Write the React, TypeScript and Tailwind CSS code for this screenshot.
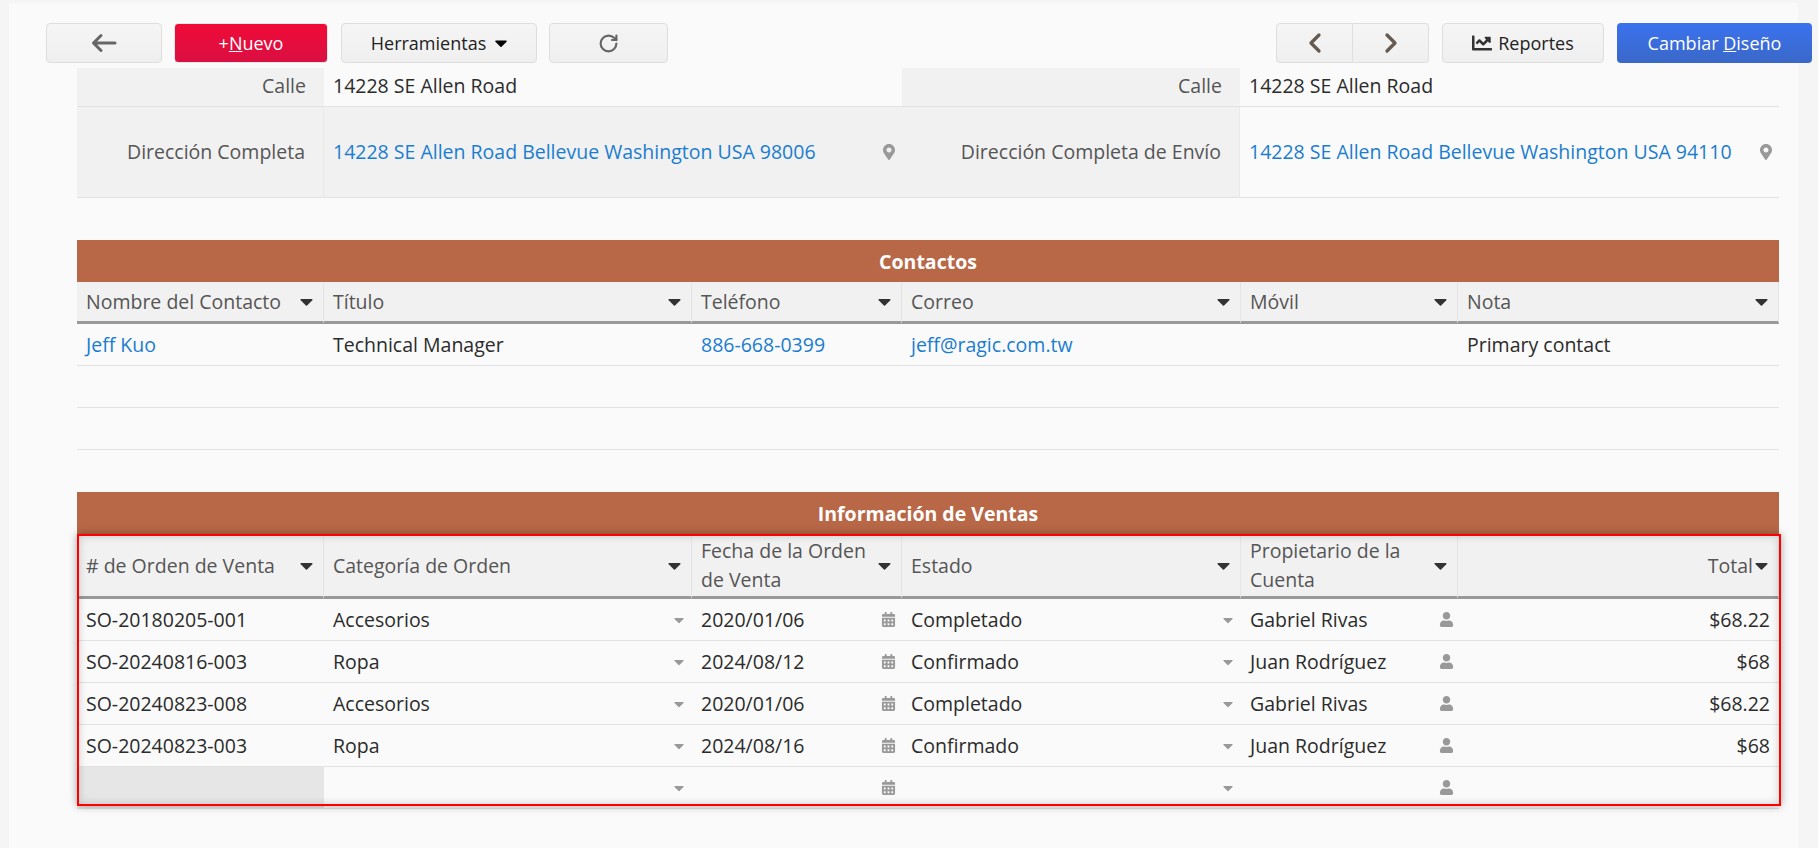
import { ChevronLeft, ChevronRight, RotateCw } from 'lucide-react';
import { FaCalendarAlt, FaCaretDown, FaChartLine, FaMapMarkerAlt, FaUser } from 'react-icons/fa';

const contactCols = [
  'Nombre del Contacto',
  'Título',
  'Teléfono',
  'Correo',
  'Móvil',
  'Nota',
];

const salesCols = [
  '# de Orden de Venta',
  'Categoría de Orden',
  'Fecha de la Orden de Venta',
  'Estado',
  'Propietario de la Cuenta',
];

const salesRows = [
  ['SO-20180205-001', 'Accesorios', '2020/01/06', 'Completado', 'Gabriel Rivas', '$68.22'],
  ['SO-20240816-003', 'Ropa', '2024/08/12', 'Confirmado', 'Juan Rodríguez', '$68'],
  ['SO-20240823-008', 'Accesorios', '2020/01/06', 'Completado', 'Gabriel Rivas', '$68.22'],
  ['SO-20240823-003', 'Ropa', '2024/08/16', 'Confirmado', 'Juan Rodríguez', '$68'],
  ['', '', '', '', '', ''],
];

const tableCols = 'grid grid-cols-[247px_368px_210px_339px_217px_321px]';
const toolBtn =
  'flex h-[40px] items-center justify-center rounded-[4px] border border-[#dedede] bg-gradient-to-b from-[#f5f5f5] to-[#efefef] text-[18px] text-[#222]';

function SectionBar({ title }: { title: string }) {
  return (
    <div className="flex h-[42px] items-center justify-center bg-[#b86847] pt-[1px] text-[19.5px] font-bold text-white">
      {title}
    </div>
  );
}

function HeadCell({ label, right, tall }: { label: string; right?: boolean; tall?: boolean }) {
  return (
    <div
      className={`flex items-center border-r border-r-[#e4e4e4] border-b-[3px] border-b-[#999] bg-[#f1f1f1] pl-[9px] pr-[6px] text-[#555] last:border-r-0 ${
        tall ? 'h-[65px] leading-[29px]' : 'h-[42px]'
      } ${right ? 'justify-end' : 'justify-between'}`}
    >
      <span className="min-w-0">{label}</span>
      <FaCaretDown className={`shrink-0 text-[#333] ${right ? 'ml-[-2px]' : ''}`} size={21} />
    </div>
  );
}

function Row({ children }: { children?: React.ReactNode }) {
  return <div className="flex h-[42px] items-center justify-between border-b border-[#e2e2e2] pl-[9px] pr-[6px] text-[#2b2b2b]">{children}</div>;
}

export default function App() {
  return (
    <div className="flex h-[848px] w-[1818px] overflow-hidden bg-[#f5f5f5] pt-[3px] font-['Open_Sans',sans-serif] text-[19.5px]">
      <div className="w-[9px] shrink-0" />
      <main className="w-[1789px] shrink-0 bg-[#fafafa] pt-[20px]">
        <div className="flex h-[40px] w-max pl-[37px]">
          <button className={`${toolBtn} w-[116px]`}>
            <svg width="26" height="20" viewBox="0 0 26 20" fill="none" stroke="#666" strokeWidth="3" strokeLinecap="round" strokeLinejoin="round">
              <path d="M24 10H3M10 2.5 2.5 10l7.5 7.5" />
            </svg>
          </button>
          <button className="ml-[12px] flex h-[40px] w-[154px] items-center justify-center rounded-[4px] border border-[#e6e6e6] bg-gradient-to-b from-[#f00a36] to-[#da0f42] text-[18px] text-white">
            +<span className="underline">N</span>uevo
          </button>
          <button className={`${toolBtn} ml-[13px] w-[196px] gap-[5px] pl-[4px]`}>
            Herramientas
            <FaCaretDown className="text-black" size={20} />
          </button>
          <button className={`${toolBtn} ml-[12px] w-[119px]`}>
            <RotateCw size={21} strokeWidth={2.5} className="text-[#666]" />
          </button>
          <div className="ml-[608px] flex">
            <button className={`${toolBtn} w-[77px] rounded-r-none`}>
              <ChevronLeft size={32} strokeWidth={2.5} className="text-[#665a50]" />
            </button>
            <button className={`${toolBtn} w-[76px] rounded-l-none border-l-0`}>
              <ChevronRight size={32} strokeWidth={2.5} className="text-[#665a50]" />
            </button>
          </div>
          <button className={`${toolBtn} ml-[13px] w-[162px] gap-[6px]`}>
            <FaChartLine size={20} className="text-[#333]" />
            Reportes
          </button>
          <button className="ml-[13px] flex h-[40px] w-[195px] items-center justify-center rounded-[4px] bg-gradient-to-b from-[#3a72ef] to-[#3a68c8] text-[18px] text-white">
            Cambiar&nbsp;<span className="underline">D</span>iseño
          </button>
        </div>

        <div className="ml-[68px] mt-[5px] w-[1702px]">
          <div className="grid grid-cols-[247px_578px_338px_539px]">
            <div className="flex h-[39px] items-center justify-end border-b border-[#e2e2e2] bg-[#f1f1f1] pb-[2px] pr-[18px] text-[#555]">Calle</div>
            <div className="flex h-[39px] items-center border-b border-[#e2e2e2] bg-[#fafafa] pb-[2px] pl-[9px] text-[#2b2b2b]">14228 SE Allen Road</div>
            <div className="flex h-[39px] items-center justify-end border-b border-[#e2e2e2] bg-[#f1f1f1] pb-[2px] pr-[18px] text-[#555]">Calle</div>
            <div className="flex h-[39px] items-center border-b border-[#e2e2e2] bg-[#fafafa] pb-[2px] pl-[9px] text-[#2b2b2b]">14228 SE Allen Road</div>

            <div className="flex h-[91px] items-center justify-end border-b border-r border-[#e2e2e2] border-r-[#e9e9e9] bg-[#f1f1f1] pr-[18px] text-[#555]">Dirección Completa</div>
            <div className="flex h-[91px] items-center justify-between border-b border-[#e2e2e2] bg-[#f1f1f1] pl-[9px] pr-[5px] text-[#1a7dd0]">
              14228 SE Allen Road Bellevue Washington USA 98006
              <FaMapMarkerAlt size={16} className="text-[#999]" />
            </div>
            <div className="flex h-[91px] items-center justify-end border-b border-r border-[#e2e2e2] border-r-[#e9e9e9] bg-[#f1f1f1] pr-[18px] text-[#555]">Dirección Completa de Envío</div>
            <div className="flex h-[91px] items-center justify-between border-b border-[#e2e2e2] bg-[#fafafa] pl-[9px] pr-[5px] text-[#1a7dd0]">
              14228 SE Allen Road Bellevue Washington USA 94110
              <FaMapMarkerAlt size={16} className="text-[#999]" />
            </div>
          </div>

          <div className="mt-[42px]">
            <SectionBar title="Contactos" />
            <div className={tableCols}>
              {contactCols.map((c) => (
                <HeadCell key={c} label={c} />
              ))}
              <Row><span className="text-[#1a7dd0]">Jeff Kuo</span></Row>
              <Row>Technical Manager</Row>
              <Row><span className="text-[#1a7dd0]">886-668-0399</span></Row>
              <Row><span className="text-[#1a7dd0]">jeff@ragic.com.tw</span></Row>
              <Row />
              <Row>Primary contact</Row>
            </div>
            <div className="h-[42px] border-b border-[#e2e2e2]" />
            <div className="h-[42px] border-b border-[#e2e2e2]" />
          </div>

          <div className="mt-[42px]">
            <SectionBar title="Información de Ventas" />
            <div className="relative">
              <div className={tableCols}>
                {salesCols.map((c) => (
                  <HeadCell key={c} label={c} tall />
                ))}
                <HeadCell label="Total" right tall />
                {salesRows.map((r, i) => (
                  <div key={i} className="contents">
                    <div className={`flex h-[42px] items-center border-b border-[#e2e2e2] pl-[9px] text-[#2b2b2b] ${r[0] ? '' : 'bg-[#e6e6e6]'}`}>{r[0]}</div>
                    <Row>
                      {r[1]}
                      <FaCaretDown className="ml-auto mr-[-1px] text-[#999]" size={16} />
                    </Row>
                    <Row>
                      {r[2]}
                      <FaCalendarAlt className="ml-auto text-[#999]" size={15} />
                    </Row>
                    <Row>
                      {r[3]}
                      <FaCaretDown className="ml-auto mr-[-1px] text-[#999]" size={16} />
                    </Row>
                    <Row>
                      {r[4]}
                      <FaUser className="ml-auto mr-[-2px] text-[#999]" size={15} />
                    </Row>
                    <div className="flex h-[42px] items-center justify-end border-b border-[#e2e2e2] pr-[9px] text-[#2b2b2b]">{r[5]}</div>
                  </div>
                ))}
              </div>
              <div className="pointer-events-none absolute bottom-[3px] left-0 right-[-2px] top-0 border-[2px] border-[#ff0000] shadow-[0_0_8px_rgba(0,0,0,0.35),inset_0_0_8px_rgba(0,0,0,0.18)]" />
            </div>
          </div>
        </div>
      </main>
    </div>
  );
}
